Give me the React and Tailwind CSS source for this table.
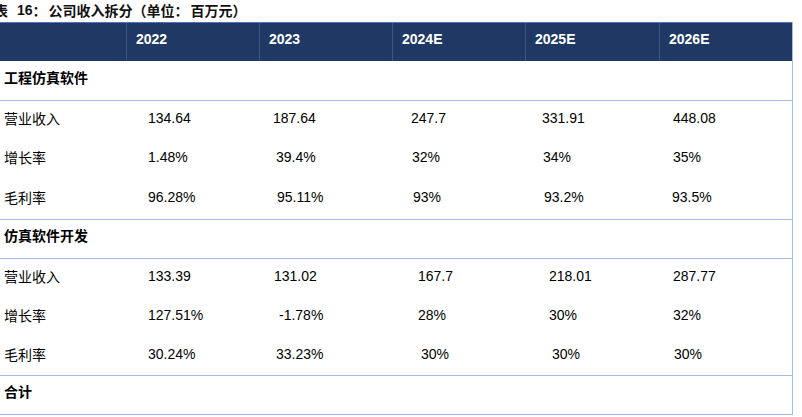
import React from "react";

const years = ["2022", "2023", "2024E", "2025E", "2026E"];

const sections = [
  {
    title: "工程仿真软件",
    rows: [
      { label: "营业收入", h: "h-[39px]", cells: [["134.64", "pl-[21px]"], ["187.64", "pl-[13px]"], ["247.7", "pl-[18px]"], ["331.91", "pl-[16px]"], ["448.08", "pl-[13px]"]] },
      { label: "增长率", h: "h-[39px]", cells: [["1.48%", "pl-[21px]"], ["39.4%", "pl-[16px]"], ["32%", "pl-[19px]"], ["34%", "pl-[17px]"], ["35%", "pl-[13px]"]] },
      { label: "毛利率", h: "h-[41px] border-b", cells: [["96.28%", "pl-[21px]"], ["95.11%", "pl-[17px]"], ["93%", "pl-[20px]"], ["93.2%", "pl-[18px]"], ["93.5%", "pl-[12px]"]] },
    ],
  },
  {
    title: "仿真软件开发",
    rows: [
      { label: "营业收入", h: "h-[39px]", cells: [["133.39", "pl-[21px]"], ["131.02", "pl-[14px]"], ["167.7", "pl-[25px]"], ["218.01", "pl-[23px]"], ["287.77", "pl-[13px]"]] },
      { label: "增长率", h: "h-[39px]", cells: [["127.51%", "pl-[21px]"], ["-1.78%", "pl-[19px]"], ["28%", "pl-[25px]"], ["30%", "pl-[23px]"], ["32%", "pl-[13px]"]] },
      { label: "毛利率", h: "h-[39px] border-b", cells: [["30.24%", "pl-[21px]"], ["33.23%", "pl-[16px]"], ["30%", "pl-[28px]"], ["30%", "pl-[26px]"], ["30%", "pl-[14px]"]] },
    ],
  },
  { title: "合计", rows: [] },
];

const grid = "grid grid-cols-[127px_133px_133px_133px_134px_133px]";

export default function App() {
  return (
    <div className="w-[802px] h-[417px] overflow-hidden bg-white text-black">
      {/* caption, clipped at the left like the source */}
      <div className="h-[22px] flex items-center -ml-[6px] pb-[2px] text-[14px] font-bold text-[#111] whitespace-nowrap font-['Noto_Sans_CJK_SC',sans-serif]">
        <span>表</span>
        <span className="ml-[9px] font-['Liberation_Sans',Arial,sans-serif]">16</span>
        <span className="inline-block w-[16px]">：</span>
        <span>公司收入拆分</span>
        <span className="inline-block w-[14px] text-right">（</span>
        <span>单位</span>
        <span className="inline-block w-[16px]">：</span>
        <span>百万元</span>
        <span className="inline-block w-[14px]">）</span>
      </div>

      <div className="w-[793px] border-r border-[#a4b9e6]">
        {/* header */}
        <div className={`${grid} h-[39px] bg-[#203864] border-t border-[#5272bb] text-white font-bold text-[14px] font-['Liberation_Sans',Arial,sans-serif]`}>
          <div className="border-r border-[#3c5585]" />
          {years.map((y, i) => (
            <div key={y} className={`flex items-center pl-[9px] pb-[5px] ${i < 4 ? "border-r border-[#3c5585]" : ""}`}>
              {y}
            </div>
          ))}
        </div>

        {sections.map((s, si) => (
          <div key={s.title}>
            <div
              className={`flex items-center pl-[4px] pb-[7px] border-b border-[#a4b9e6] font-bold text-[14px] font-['Noto_Sans_CJK_SC',sans-serif] ${si === 0 ? "h-[40px]" : "h-[39px]"}`}
            >
              {s.title}
            </div>
            {s.rows.map((r) => (
              <div key={r.label} className={`${grid} ${r.h} border-[#a4b9e6] text-[14px]`}>
                <div className="flex items-center pl-[4px] pb-[4px] font-['Noto_Sans_CJK_SC',sans-serif]">
                  {r.label}
                </div>
                {r.cells.map(([v, pad], i) => (
                  <div key={i} className={`flex items-center pb-[4px] font-['Liberation_Sans',Arial,sans-serif] ${pad}`}>
                    {v}
                  </div>
                ))}
              </div>
            ))}
          </div>
        ))}
      </div>
    </div>
  );
}
